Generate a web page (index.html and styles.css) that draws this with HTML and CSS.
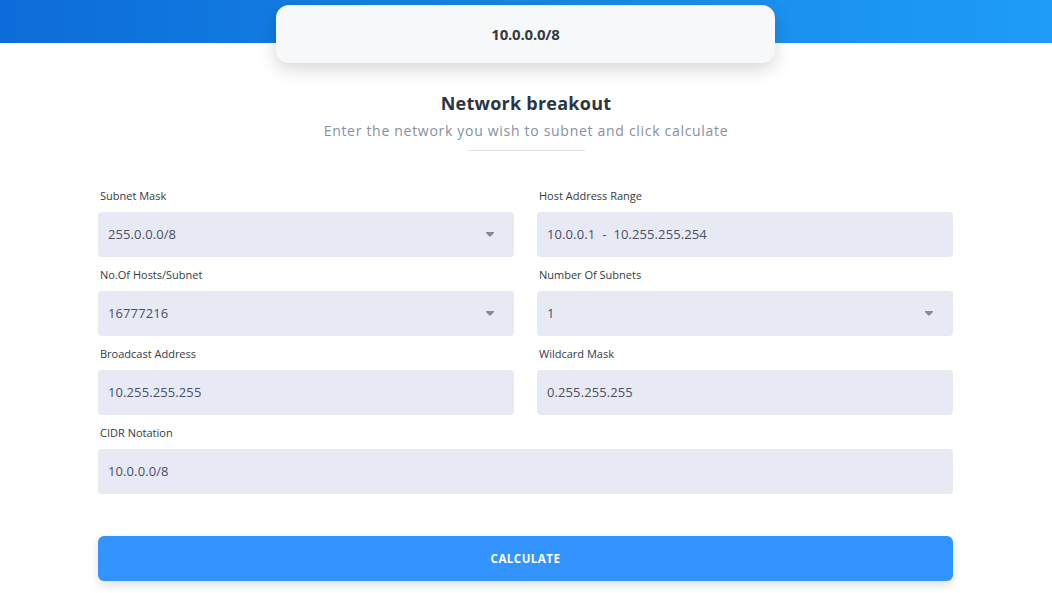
FILE: index.html
```html
<!DOCTYPE html>
<html lang="en">
<head>
<meta charset="utf-8">
<title>Subnet Calculator</title>
<link rel="stylesheet" href="styles.css">
</head>
<body>
<header class="hero">
  <div class="network-card">10.0.0.0/8</div>
</header>

<section class="intro">
  <h1 class="title">Network breakout</h1>
  <p class="subtitle">Enter the network you wish to subnet and click calculate</p>
  <div class="divider"></div>
</section>

<form class="form">
  <div class="grid">
    <div class="field">
      <label class="label">Subnet Mask</label>
      <div class="box select"><span>255.0.0.0/8</span><svg class="caret" width="8" height="5" viewBox="0 0 8 5"><polygon points="0,0 8,0 8,1 4.6,4.6 3.4,4.6 0,1" fill="#8a8a8a"/></svg></div>
    </div>
    <div class="field">
      <label class="label">Host Address Range</label>
      <div class="box"><span>10.0.0.1&nbsp; - &nbsp;10.255.255.254</span></div>
    </div>
    <div class="field">
      <label class="label">No.Of Hosts/Subnet</label>
      <div class="box select"><span>16777216</span><svg class="caret" width="8" height="5" viewBox="0 0 8 5"><polygon points="0,0 8,0 8,1 4.6,4.6 3.4,4.6 0,1" fill="#8a8a8a"/></svg></div>
    </div>
    <div class="field">
      <label class="label">Number Of Subnets</label>
      <div class="box select"><span>1</span><svg class="caret" width="8" height="5" viewBox="0 0 8 5"><polygon points="0,0 8,0 8,1 4.6,4.6 3.4,4.6 0,1" fill="#8a8a8a"/></svg></div>
    </div>
    <div class="field">
      <label class="label">Broadcast Address</label>
      <div class="box"><span>10.255.255.255</span></div>
    </div>
    <div class="field">
      <label class="label">Wildcard Mask</label>
      <div class="box"><span>0.255.255.255</span></div>
    </div>
    <div class="field wide">
      <label class="label">CIDR Notation</label>
      <div class="box"><span>10.0.0.0/8</span></div>
    </div>
  </div>
  <button type="button" class="calc">CALCULATE</button>
</form>
</body>
</html>
```

FILE: styles.css
```css
* { box-sizing: border-box; }
html, body { margin: 0; padding: 0; background: #ffffff; }
body {
  font-family: "Open Sans", "Liberation Sans", sans-serif;
  color: #2f3542;
  width: 1052px;
  height: 593px;
  overflow: hidden;
}
.hero {
  height: 43px;
  background: linear-gradient(90deg, #0d6cd9 0%, #1687e8 50%, #1e9cf7 100%);
  padding-top: 5px;
  display: flex;
  justify-content: center;
}
.network-card {
  width: 499px;
  height: 58px;
  flex: none;
  margin-left: -1px;
  background: #f7f8fa;
  border-radius: 13px;
  box-shadow: 0 6px 18px rgba(0, 0, 0, 0.16);
  display: flex;
  align-items: center;
  justify-content: center;
  font-weight: 700;
  font-size: 15px;
  color: #36393f;
  letter-spacing: -0.2px;
}
.intro {
  margin-top: 49px;
  text-align: center;
  display: flex;
  flex-direction: column;
  align-items: center;
}
.title {
  margin: 0;
  font-size: 18px;
  line-height: 22px;
  font-weight: 700;
  color: #2c3444;
  letter-spacing: 0.25px;
}
.subtitle {
  margin: 7px 0 0;
  font-size: 14px;
  line-height: 20px;
  color: #8590a3;
  letter-spacing: 0.7px;
}
.divider {
  width: 117px;
  height: 1px;
  background: #dbe2ea;
  margin-top: 9px;
}
.form {
  width: 855px;
  margin: 37px 0 0 98px;
}
.grid {
  display: grid;
  grid-template-columns: 416px 416px;
  column-gap: 23px;
}
.field { margin-bottom: 10px; }
.field.wide { grid-column: 1 / span 2; }
.label {
  display: block;
  font-size: 11px;
  line-height: 16px;
  color: #343a46;
  margin: 0 0 8px 2px;
}
.box {
  height: 45px;
  background: #e7eaf5;
  border-radius: 4px;
  padding: 0 20px 2px 10px;
  display: flex;
  align-items: center;
  justify-content: space-between;
  font-size: 13px;
  color: #4b4f66;
  letter-spacing: 0.1px;
}
.caret { display: block; margin-top: 2px; }
.calc {
  display: block;
  width: 100%;
  height: 45px;
  margin-top: 32px;
  border: 0;
  border-radius: 6px;
  background: #3393ff;
  color: #ffffff;
  font-family: inherit;
  font-weight: 700;
  font-size: 11.5px;
  letter-spacing: 0.5px;
  box-shadow: 0 4px 10px rgba(0, 0, 0, 0.12);
}
```
